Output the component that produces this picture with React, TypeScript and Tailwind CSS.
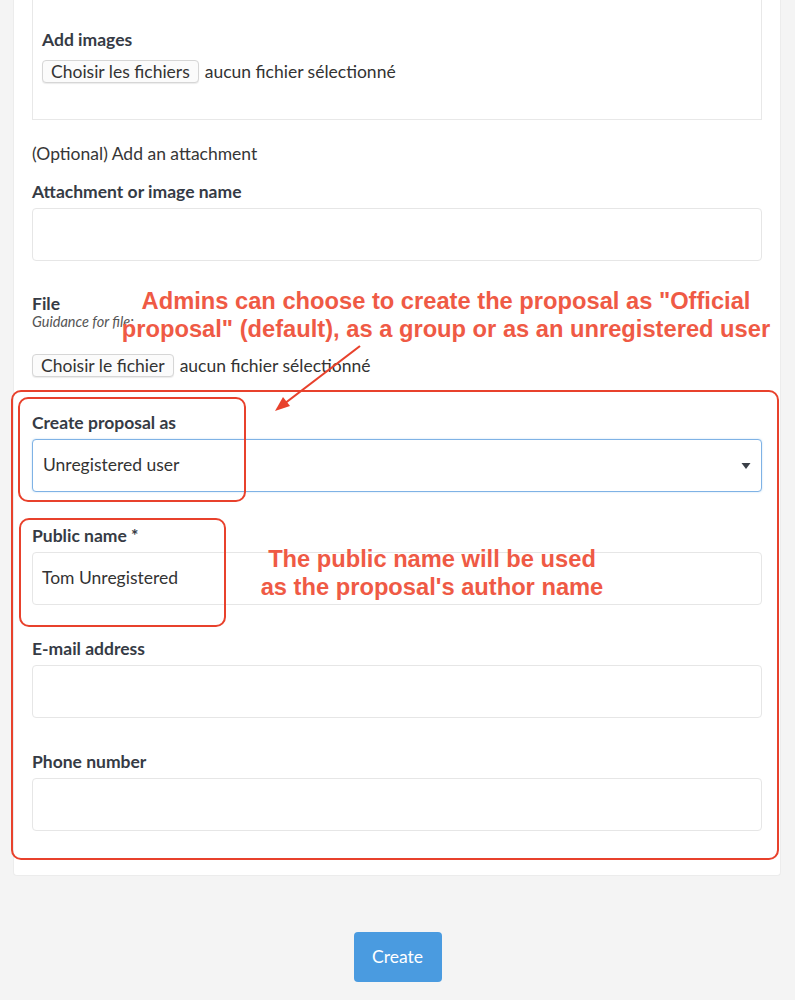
import React from 'react';

const labelCls = 'block text-[17.5px] leading-6 font-bold text-[#363b45]';
const inputCls = 'block w-full h-[53px] rounded-[4px] border border-[#e6e6e6] bg-white px-[9px] text-[17.5px] text-[#333]';
const annoFont = { fontFamily: '"Liberation Sans", Arial, sans-serif' };

const FileButton = ({ label }: { label: string }) => (
  <div className="flex items-center gap-[6px] text-[17.5px] leading-[23px] text-[#333]">
    <span className="h-[23px] px-[8px] flex items-center rounded-[4px] border border-[#d6d6d6] bg-[#fbfbfb] shadow-[0_1px_1px_rgba(0,0,0,0.08)]">
      {label}
    </span>
    <span>aucun fichier sélectionné</span>
  </div>
);

export default function App() {
  return (
    <div className="min-h-[1000px] bg-[#f4f4f4] pb-[19px]" style={{ fontFamily: 'Lato, "Open Sans", sans-serif' }}>
      <div className="relative mx-[13px] w-[768px] bg-white border-x border-b border-[#ececec] rounded-b-[4px] px-[18px] pb-[44px]">
        <div className="border-x border-b border-[#e8e8e8] pl-[9px] pt-[28px] pb-[36px]">
          <span className={labelCls}>Add images</span>
          <div className="mt-2">
            <FileButton label="Choisir les fichiers" />
          </div>
        </div>

        <p className="mt-[22px] text-[17.5px] leading-6 text-[#363636]">(Optional) Add an attachment</p>

        <label className={`${labelCls} mt-[14px]`}>Attachment or image name</label>
        <div className={`${inputCls} mt-1`} />

        <label className="block mt-[33px] text-[17.5px] leading-5 font-bold text-[#363b45]">File</label>
        <p className="text-[14.5px] leading-4 italic text-[#555]">Guidance for file:</p>
        <div className="mt-6">
          <FileButton label="Choisir le fichier" />
        </div>

        <label className={`${labelCls} mt-[34px]`}>Create proposal as</label>
        <div className="mt-1 h-[53px] w-full rounded-[4px] border border-[#7fb2e5] bg-white shadow-[0_0_2px_rgba(66,153,225,0.35)] flex items-center justify-between px-[10px]">
          <span className="text-[17.5px] text-[#333]">Unregistered user</span>
          <svg width="10" height="8" viewBox="0 0 10 8"><path d="M0.5 1 L9.5 1 L5 7 Z" fill="#3a3f47" /></svg>
        </div>

        <label className={`${labelCls} mt-8`}>Public name *</label>
        <div className={`${inputCls} mt-1 flex items-center`}>Tom Unregistered</div>

        <label className={`${labelCls} mt-8`}>E-mail address</label>
        <div className={`${inputCls} mt-1`} />

        <label className={`${labelCls} mt-8`}>Phone number</label>
        <div className={`${inputCls} mt-1`} />

        {/* annotations */}
        <div className="absolute left-[-3px] top-[390px] w-[768px] h-[470px] rounded-[10px] border-2 border-[#e8412c]" />
        <div className="absolute left-[4px] top-[397px] w-[228px] h-[105px] rounded-[10px] border-2 border-[#e8412c]" />
        <div className="absolute left-[5px] top-[518px] w-[207px] h-[109px] rounded-[10px] border-2 border-[#e8412c]" />
        <div
          className="absolute left-[72px] top-[287px] w-[720px] text-center text-[23.7px] leading-[28px] font-bold text-[#ef5a45] whitespace-nowrap"
          style={annoFont}
        >
          Admins can choose to create the proposal as "Official<br />proposal" (default), as a group or as an unregistered user
        </div>
        <svg className="absolute left-[230px] top-[340px]" width="130" height="80" viewBox="0 0 130 80">
          <line x1="116" y1="6" x2="40" y2="64" stroke="#e8412c" strokeWidth="2.2" />
          <path d="M31 71 L39 57 L46 66 Z" fill="#e8412c" />
        </svg>
        <div
          className="absolute left-[218px] top-[545px] w-[400px] text-center text-[23.7px] leading-[28px] font-bold text-[#ef5a45] whitespace-nowrap"
          style={annoFont}
        >
          The public name will be used<br />as the proposal's author name
        </div>
      </div>

      <div className="mt-[56px] flex justify-center">
        <button className="h-[50px] w-[88px] rounded-[4px] bg-[#4a9be0] text-white text-[17.5px]">Create</button>
      </div>
    </div>
  );
}
